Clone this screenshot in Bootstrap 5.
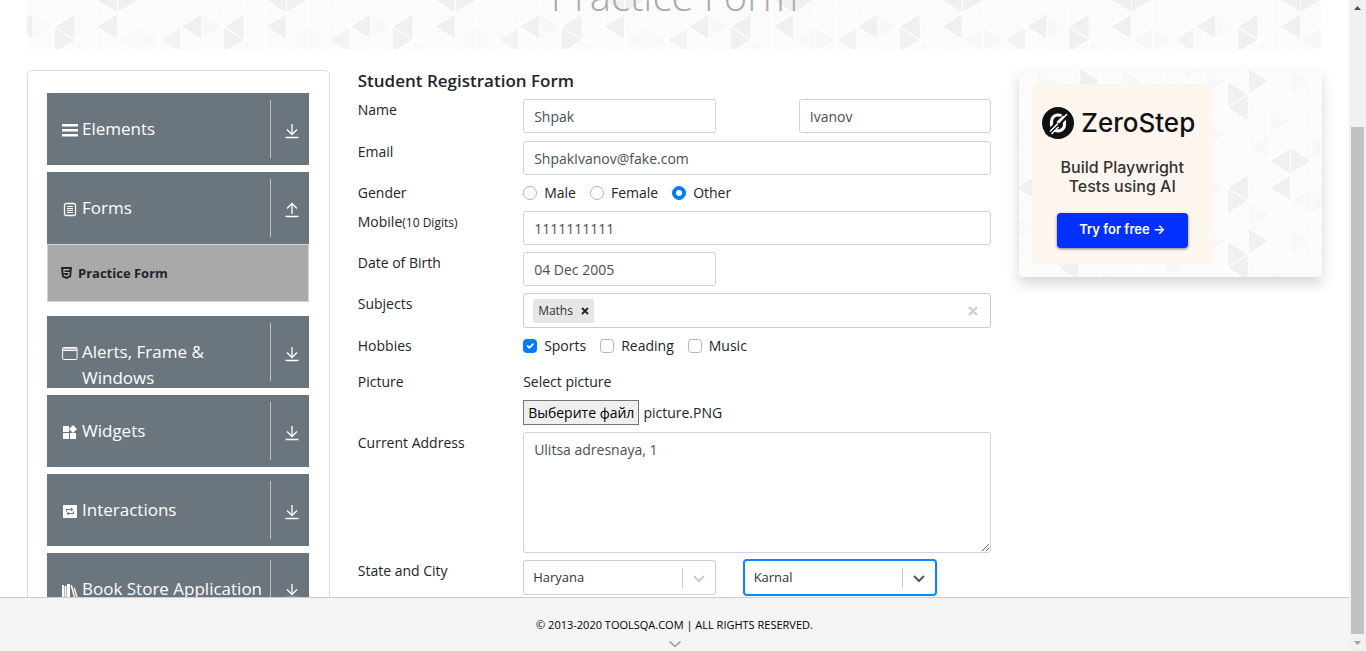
<!DOCTYPE html>
<html lang="en">
<head>
<meta charset="utf-8">
<meta name="viewport" content="width=device-width, initial-scale=1">
<title>Practice Form</title>
<link href="https://cdn.jsdelivr.net/npm/bootstrap@5.3.0/dist/css/bootstrap.min.css" rel="stylesheet">
<style>
  body { font-family: "Open Sans", "Noto Sans", sans-serif; font-size: 14px; line-height: 22px; color: #212529; }
  .page-scroll, .page-main { min-width: 0; min-height: 0; }
  .page-pad { padding: 0 27px; }
  .wide-row { --bs-gutter-x: 28px; }
  .tri { background-color: #fbfbfb; background-size: 169px 160px;
    background-image: url("data:image/svg+xml,%3Csvg xmlns='http://www.w3.org/2000/svg' viewBox='0 0 168 156' preserveAspectRatio='none'%3E%3Cg fill='%23f0f0f0'%3E%3Cpath d='M21 26L42 13V39zM21 26V52L42 39zM63 26L84 13V39zM147 26L168 13V39zM42 65V91L63 78zM21 78V104L42 91zM21 104L42 91V117z'/%3E%3Cpath d='M126 39L147 26V52z' fill='%23f3f3f3'/%3E%3Cpath d='M84 143V169L63 156zM84 143V169L105 156zM84 -13V13L63 0zM84 -13V13L105 0z'/%3E%3C/g%3E%3Cg fill='%23f8f8f8'%3E%3Cpath d='M0 13V39L21 26zM42 39V65L63 52zM105 26V52L126 39zM84 65V91L105 78zM126 91V117L147 104zM147 52V78L168 65zM63 104V130L84 117zM105 130V156L126 143zM0 117V143L21 130zM0 65V91L21 78zM84 39L105 26V52zM42 143L63 130V156zM126 143L147 130V156z'/%3E%3C/g%3E%3Cpath fill='none' stroke='%23fff' stroke-width='1.200' d='M0 0V156M21 0V156M42 0V156M63 0V156M84 0V156M105 0V156M126 0V156M147 0V156M168 0V156M0 -91L168 13M0 -65L168 39M0 -39L168 65M0 -13L168 91M0 13L168 117M0 39L168 143M0 65L168 169M0 91L168 195M0 117L168 221M0 143L168 247M0 13L168 -91M0 39L168 -65M0 65L168 -39M0 91L168 -13M0 117L168 13M0 143L168 39M0 169L168 65M0 195L168 91M0 221L168 117M0 247L168 143'/%3E%3C/svg%3E"); }
  .banner { height: 49px; margin-bottom: 21px; background-position: 6px 0; }
  .banner h1 { font-size: 40px; line-height: 48px; font-weight: 300; color: #aaa; margin: 0 0 29px; }

  .side-box { border: 1px solid #ddd; border-radius: 5px; padding: 22px 20px 0 19px; height: 700px; }
  .side-item { height: 72px; margin-bottom: 7px; border: 0; padding: 7px 0; overflow: hidden; background: #6a757d; color: #fff; font-size: 17px; line-height: 26px; text-align: left; }
  .side-name { padding: 16px 0 0 15px; height: 58px; gap: 4px; }
  .side-name svg { width: 16px; height: 16px; margin-top: 6px; flex: none; }
  .side-arrow { width: 39px; height: 58px; border-left: 1px solid #c0c0c0; padding: 4px 0 0 5px; flex: none; }
  .sub-item { height: 58px; margin: -7px 0 14px; border: 1px solid #ced4da; background: #a9a9a9; color: #212529; font-weight: 700; font-size: 13px; padding-left: 13px; gap: 6px; text-decoration: none; }

  .form-title { font-size: 17px; line-height: 22px; font-weight: 600; margin: 0; }
  .form-col { display: flex; flex-direction: column; gap: 7px; }
  .name-row { min-height: 35px; }
  .digits { font-size: 12px; }
  .picture-row { margin-top: 7px; }
  .field { height: 34px; padding: 6px 10px; border: 1px solid #ced4da; border-radius: 3px; font-size: 14px; line-height: 20px; color: #495057; }
  textarea.field { height: 121px; padding-top: 7px; resize: vertical; display: block; }
  .opt { gap: 7px; margin-right: 14px; }
  .form-check-input { margin: 0; width: 14px; height: 14px; border-color: #adb5bd; }
  .form-check-input:checked { background-color: #007bff; border-color: #007bff; }
  .tags { height: 35px; border: 1px solid #ccc; border-radius: 3px; padding: 0 12px 0 9px; }
  .tag { background: #e6e6e6; border-radius: 2px; height: 24px; padding: 0 5px; gap: 8px; font-size: 12px; color: #333; }
  .plain { border: 0; background: none; padding: 0; display: flex; }
  .tags input { border: 0; outline: 0; min-width: 0; }
  .file-btn { height: 25px; line-height: 23px; border: 1px solid #767676; background: #efefef; color: #000; padding: 0 4px; font-size: 14px; }
  .pick { height: 35px; border: 1px solid #ccc; border-radius: 3px; padding: 0 40px 2px 9px; font-size: 13px; color: #333; outline: 0;
    background: #fff no-repeat right 6px center / 27px 20px url("data:image/svg+xml,%3Csvg xmlns='http://www.w3.org/2000/svg' viewBox='0 0 27 20'%3E%3Cpath d='M.5 0V20' stroke='%23ccc'/%3E%3Cpath d='M12 8l5 5 5-5' fill='none' stroke='%23ccc' stroke-width='2'/%3E%3C/svg%3E"); appearance: none; }
  .pick.active { border-color: #0a84ff; box-shadow: 0 0 0 1px #0a84ff;
    background-image: url("data:image/svg+xml,%3Csvg xmlns='http://www.w3.org/2000/svg' viewBox='0 0 27 20'%3E%3Cpath d='M.5 0V20' stroke='%23ccc'/%3E%3Cpath d='M12 8l5 5 5-5' fill='none' stroke='%23555' stroke-width='2'/%3E%3C/svg%3E"); }

  .promo { height: 207px; padding: 14px 13px; background-position: 18px 91px; border-radius: 2px; box-shadow: 0 7px 14px rgba(0,0,0,.16); }
  .promo-in { width: 180px; height: 180px; background: #fff6f0; font-family: Inter, sans-serif; color: #333; padding-top: 22px; }
  .promo-logo { font-size: 26px; line-height: 34px; font-weight: 500; color: #111; gap: 7px; margin-bottom: 18px; padding-right: 7px; }
  .promo-text { font-size: 16px; line-height: 19px; font-weight: 500; margin-bottom: 17px; }
  .promo-btn { width: 131px; height: 35px; padding: 0 0 3px; border: 0; border-radius: 4px; background: #0230ff; color: #fff; font-size: 13px; font-weight: 600; box-shadow: 0 1px 3px rgba(0,0,0,.5); }

  .foot { height: 54px; border-top: 1px solid #ccc; background: #f4f4f4; font-size: 11px; line-height: 20px; color: #000; padding-top: 17px; }
  .foot svg { margin-top: 6px; }
  .sbar { width: 17px; background: #f1f1f1; flex: none; }
  .sbar-top { height: 127px; padding-top: 6px; }
  .sbar-thumb { width: 13px; background: #c1c1c1; }
  .sbar-end { height: 17px; }
</style>
</head>
<body>
<svg class="d-none">
  <symbol id="down" viewBox="0 0 16 16"><path d="M8 1v10M3 6.500l5 5 5-5M1.500 14.500h13" fill="none" stroke="#fff" stroke-width="1.300"/></symbol>
  <symbol id="up" viewBox="0 0 16 16"><path d="M8 12V2M3 6.500l5-5 5 5M1.500 14.500h13" fill="none" stroke="#fff" stroke-width="1.300"/></symbol>
</svg>
<div class="d-flex vh-100 overflow-hidden">
  <div class="page-scroll flex-grow-1 d-flex flex-column">
    <div class="page-main flex-grow-1 overflow-hidden">
      <div class="page-pad">
        <header class="banner tri d-flex justify-content-center align-items-end overflow-hidden"><h1>Practice Form</h1></header>
        <div class="row wide-row">
          <nav class="col-3">
            <div class="side-box">
              <button class="side-item w-100 d-flex"><span class="side-name d-flex flex-grow-1"><svg viewBox="0 0 16 16" fill="#fff"><path d="M0 2h16v2.500H0zM0 7h16v2.500H0zM0 12h16v2.500H0z"/></svg><span>Elements</span></span><span class="side-arrow d-flex align-items-center justify-content-center"><svg width="16" height="16"><use href="#down"/></svg></span></button>
              <button class="side-item w-100 d-flex"><span class="side-name d-flex flex-grow-1"><svg viewBox="0 0 16 16" fill="none" stroke="#fff"><rect x="2.500" y="2.500" width="11" height="12" rx="1.500" stroke-width="1.300"/><path d="M5 5.500h6M5 7.500h6M5 9.500h6M5 11.500h6"/></svg><span>Forms</span></span><span class="side-arrow d-flex align-items-center justify-content-center"><svg width="16" height="16"><use href="#up"/></svg></span></button>
              <a href="#" class="sub-item d-flex align-items-center"><svg width="11" height="12" viewBox="0 0 11 12"><path d="M0 0h11l-1 10-4.500 2L1 10z" fill="#212529"/><path d="M8.500 2.700H3V5.500h5L7.700 8.300l-2.200.7-2.200-.7V7.500" fill="none" stroke="#bbb" stroke-width="1.200"/></svg>Practice Form</a>
              <button class="side-item w-100 d-flex"><span class="side-name d-flex flex-grow-1"><svg viewBox="0 0 16 16" fill="none" stroke="#fff"><rect x=".6" y="2.500" width="14.500" height="12" rx=".8"/><path d="M1 5.500h14"/><path d="M1 3.800h14" stroke="#dde" stroke-width="1.500"/></svg><span>Alerts, Frame &amp; Windows</span></span><span class="side-arrow d-flex align-items-center justify-content-center"><svg width="16" height="16"><use href="#down"/></svg></span></button>
              <button class="side-item w-100 d-flex"><span class="side-name d-flex flex-grow-1"><svg viewBox="0 0 16 16" fill="#fff"><path d="M1 2h6v6H1zM1 9h6v6H1zM8 9h6v6H8zM11 1l4 4-4 4-4-4z"/></svg><span>Widgets</span></span><span class="side-arrow d-flex align-items-center justify-content-center"><svg width="16" height="16"><use href="#down"/></svg></span></button>
              <button class="side-item w-100 d-flex"><span class="side-name d-flex flex-grow-1"><svg viewBox="0 0 16 16"><path d="M1 2h14v13H1z" fill="#fff"/><path d="M4.500 8.500v-2h5M11.500 8.500v2h-5" fill="none" stroke="#6a757d" stroke-width="1.200"/><path d="M9 4.500l2.500 2L9 8.500zM7 8.500l-2.500 2L7 12.500z" fill="#6a757d"/></svg><span>Interactions</span></span><span class="side-arrow d-flex align-items-center justify-content-center"><svg width="16" height="16"><use href="#down"/></svg></span></button>
              <button class="side-item w-100 d-flex"><span class="side-name d-flex flex-grow-1"><svg viewBox="0 0 16 16" fill="#fff"><path d="M0 3h2v13H0zM2.500 4h2v12h-2zM5 2h3v14H5zM8.500 3.500l1.500-.5 3.500 13H12zM11.500 6l1.300-.4L16 16h-1.500z"/></svg><span class="text-nowrap">Book Store Application</span></span><span class="side-arrow d-flex align-items-center justify-content-center"><svg width="16" height="16"><use href="#down"/></svg></span></button>
            </div>
          </nav>
          <main class="col-6">
            <form class="form-col">
              <h5 class="form-title">Student Registration Form</h5>
              <div class="row wide-row name-row">
                <label class="col-3" for="first">Name</label>
                <div class="col-4"><input id="first" class="form-control field" value="Shpak"></div>
                <div class="col-4 offset-1"><input aria-label="Last name" class="form-control field" value="Ivanov"></div>
              </div>
              <div class="row wide-row">
                <label class="col-3" for="email">Email</label>
                <div class="col-9"><input id="email" type="email" class="form-control field" value="ShpakIvanov@fake.com"></div>
              </div>
              <div class="row wide-row">
                <div class="col-3">Gender</div>
                <div class="col-9 d-flex">
                  <label class="opt d-flex align-items-center"><input class="form-check-input" type="radio" name="g">Male</label>
                  <label class="opt d-flex align-items-center"><input class="form-check-input" type="radio" name="g">Female</label>
                  <label class="opt d-flex align-items-center"><input class="form-check-input" type="radio" name="g" checked>Other</label>
                </div>
              </div>
              <div class="row wide-row">
                <label class="col-3" for="mobile">Mobile<span class="digits">(10 Digits)</span></label>
                <div class="col-9"><input id="mobile" class="form-control field" value="1111111111"></div>
              </div>
              <div class="row wide-row">
                <label class="col-3" for="dob">Date of Birth</label>
                <div class="col-4"><input id="dob" class="form-control field" value="04 Dec 2005"></div>
              </div>
              <div class="row wide-row">
                <label class="col-3" for="subj">Subjects</label>
                <div class="col-9"><div class="tags d-flex align-items-center">
                  <span class="tag d-flex align-items-center">Maths<button type="button" class="plain" aria-label="Remove Maths"><svg width="8" height="8" viewBox="0 0 8 8"><path d="M1 1l6 6M7 1L1 7" stroke="#222" stroke-width="1.800"/></svg></button></span>
                  <input id="subj" class="flex-grow-1">
                  <button type="button" class="plain" aria-label="Clear"><svg width="10" height="10" viewBox="0 0 10 10"><path d="M1 1l8 8M9 1L1 9" stroke="#ccc" stroke-width="2.200"/></svg></button>
                </div></div>
              </div>
              <div class="row wide-row">
                <div class="col-3">Hobbies</div>
                <div class="col-9 d-flex">
                  <label class="opt d-flex align-items-center"><input class="form-check-input" type="checkbox" checked>Sports</label>
                  <label class="opt d-flex align-items-center"><input class="form-check-input" type="checkbox">Reading</label>
                  <label class="opt d-flex align-items-center"><input class="form-check-input" type="checkbox">Music</label>
                </div>
              </div>
              <div class="row wide-row picture-row">
                <div class="col-3">Picture</div>
                <div class="col-9 form-col">
                  <label for="pic">Select picture</label>
                  <div class="d-flex align-items-center gap-1 position-relative"><input id="pic" type="file" class="visually-hidden"><label for="pic" class="file-btn">Выберите файл</label><span>picture.PNG</span></div>
                </div>
              </div>
              <div class="row wide-row">
                <label class="col-3" for="addr">Current Address</label>
                <div class="col-9"><textarea id="addr" class="form-control field">Ulitsa adresnaya, 1</textarea></div>
              </div>
              <div class="row wide-row">
                <label class="col-3" for="state">State and City</label>
                <div class="col-4"><select id="state" class="pick w-100"><option>Haryana</option></select></div>
                <div class="col-4"><select aria-label="City" class="pick active w-100"><option>Karnal</option></select></div>
              </div>
            </form>
          </main>
          <aside class="col-3">
            <div class="promo tri">
              <div class="promo-in d-flex flex-column align-items-center text-center">
                <div class="promo-logo d-flex align-items-center"><svg width="32" height="32" viewBox="0 0 32 32"><circle cx="16" cy="16" r="16" fill="#111"/><rect x="9.500" y="8" width="13" height="16" rx="6.500" fill="none" stroke="#fff" stroke-width="3.200"/><path d="M5 28L27 5" stroke="#111" stroke-width="6"/><path d="M8 24.500l8-8M16.500 16L25 7M9.500 27l7-7M15 15.500l6.500-6.500" stroke="#fff" stroke-width="1.500"/></svg>ZeroStep</div>
                <div class="promo-text">Build Playwright<br>Tests using AI</div>
                <button class="promo-btn">Try for free →</button>
              </div>
            </div>
          </aside>
        </div>
      </div>
    </div>
    <footer class="foot d-flex flex-column align-items-center flex-shrink-0"><span>© 2013-2020 TOOLSQA.COM | ALL RIGHTS RESERVED.</span><svg width="12" height="7" viewBox="0 0 12 7"><path d="M.5 .5L6 5.500 11.500 .5" fill="none" stroke="#888" stroke-width="1.200"/></svg></footer>
  </div>
  <div class="sbar d-flex flex-column align-items-center" aria-hidden="true">
    <div class="sbar-top"><svg class="d-block" width="7" height="4"><path d="M0 4L3.500 0 7 4z" fill="#505050"/></svg></div>
    <div class="sbar-thumb flex-grow-1"></div>
    <div class="sbar-end d-flex align-items-center"><svg width="7" height="4"><path d="M0 0L3.500 4 7 0z" fill="#a3a3a3"/></svg></div>
  </div>
</div>
<script src="https://cdn.jsdelivr.net/npm/bootstrap@5.3.0/dist/js/bootstrap.bundle.min.js"></script>
</body>
</html>
